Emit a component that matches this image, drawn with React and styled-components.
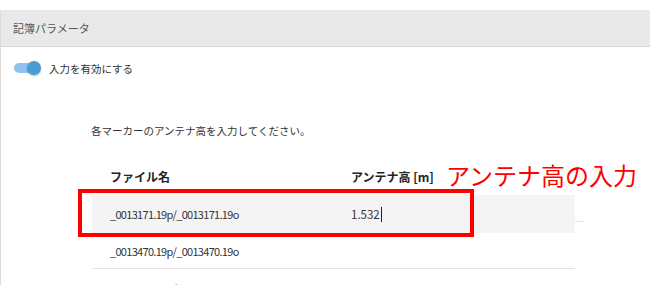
import React from 'react';
import styled, { createGlobalStyle } from 'styled-components';

const GlobalStyle = createGlobalStyle`
  html, body {
    margin: 0;
    padding: 0;
    background: #fff;
  }
  body {
    font-family: 'Noto Sans CJK JP', 'Noto Sans', sans-serif;
    color: #333;
  }
`;

const Page = styled.div`
  position: relative;
  width: 650px;
  height: 285px;
  padding-top: 10px;
  box-sizing: border-box;
  overflow: hidden;
`;

const Panel = styled.section`
  border-left: 1px solid #dcdcdc;
  height: 100%;
`;

const PanelHeader = styled.header`
  height: 36px;
  display: flex;
  align-items: center;
  padding-left: 12px;
  background: #e9e9e9;
  border-bottom: 1px solid #d6d6d6;
  font-size: 11px;
  color: #555;
`;

const ToggleRow = styled.label`
  display: flex;
  align-items: center;
  gap: 7px;
  height: 14px;
  margin-top: 14px;
  padding-left: 13px;
  font-size: 10.5px;
  color: #333;
`;

const Switch = styled.span`
  position: relative;
  width: 28px;
  height: 14px;
  &::before {
    content: '';
    position: absolute;
    left: 0;
    top: 2px;
    width: 24px;
    height: 10px;
    border-radius: 5px;
    background: #8cc4ef;
  }
  &::after {
    content: '';
    position: absolute;
    left: ${(p) => (p.$on ? '13px' : '0')};
    top: 0;
    width: 14px;
    height: 14px;
    border-radius: 50%;
    background: #4a9bd6;
    box-shadow: 0 1px 2px rgba(0, 0, 0, 0.25);
  }
`;

const Instruction = styled.p`
  margin: 48px 0 0;
  padding-left: 90px;
  height: 16px;
  line-height: 16px;
  font-size: 10.5px;
  color: #333;
`;

const Table = styled.div`
  width: 483px;
  margin: 18px 0 0 91px;
`;

const Row = styled.div`
  position: relative;
  display: grid;
  grid-template-columns: 241px 1fr;
  align-items: center;
  height: ${(p) => p.$height || 38}px;
  padding: 0 18px;
  box-sizing: border-box;
  font-size: ${(p) => (p.$head ? 12 : 11)}px;
  font-weight: ${(p) => (p.$head ? 700 : 400)};
  color: ${(p) => (p.$head ? '#222' : '#333')};
  background: ${(p) => (p.$active ? '#f4f4f4' : 'transparent')};
  border-bottom: ${(p) => (p.$line ? '1px solid #e2e2e2' : 'none')};
  ${(p) =>
    p.$active &&
    `&::after {
      content: '';
      position: absolute;
      right: -9px;
      top: 26px;
      width: 9px;
      height: 1px;
      background: #e6e6e6;
    }`}
`;

const FileName = styled.span`
  letter-spacing: -0.7px;
`;

const Value = styled.span`
  display: inline-flex;
  align-items: center;
  font-size: 11.5px;
`;

const Caret = styled.span`
  display: inline-block;
  width: 1px;
  height: 15px;
  margin-left: 1px;
  background: #222;
`;

const Highlight = styled.div`
  position: absolute;
  left: 78px;
  top: 189px;
  width: 396px;
  height: 48px;
  border: 4px solid #ff0000;
  box-sizing: border-box;
  pointer-events: none;
`;

const Note = styled.div`
  position: absolute;
  left: 446px;
  top: 163px;
  font-size: 24px;
  line-height: 24px;
  color: #ff0000;
  white-space: nowrap;
`;

const files = [
  '_0013171.19p/_0013171.19o',
  '_0013470.19p/_0013470.19o',
  '_0013471.19p/_0013471.19o',
];

export default function App() {
  return (
    <Page>
      <GlobalStyle />
      <Panel>
        <PanelHeader>記簿パラメータ</PanelHeader>
        <ToggleRow>
          <Switch $on />
          入力を有効にする
        </ToggleRow>
        <Instruction>各マーカーのアンテナ高を入力してください。</Instruction>
        <Table>
          <Row $head>
            <span>ファイル名</span>
            <span>アンテナ高 [m]</span>
          </Row>
          <Row $active>
            <FileName>{files[0]}</FileName>
            <Value>
              1.532
              <Caret />
            </Value>
          </Row>
          <Row $height={36} $line>
            <FileName>{files[1]}</FileName>
            <span />
          </Row>
          <Row>
            <FileName>{files[2]}</FileName>
            <span />
          </Row>
        </Table>
      </Panel>
      <Highlight />
      <Note>アンテナ高の入力</Note>
    </Page>
  );
}
